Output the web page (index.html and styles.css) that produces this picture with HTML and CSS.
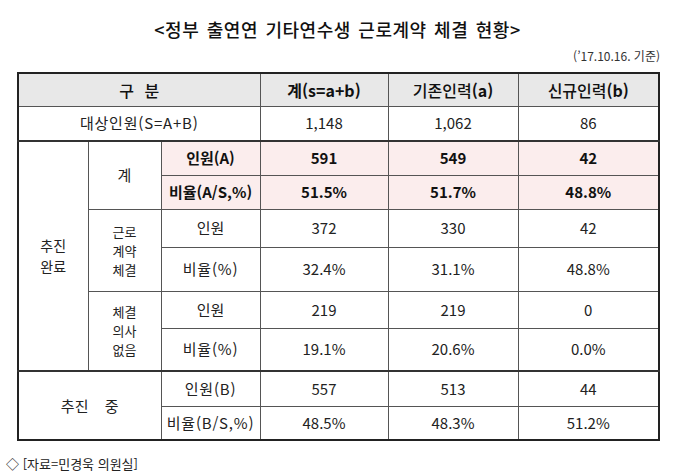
FILE: index.html
```html
<!DOCTYPE html>
<html lang="ko">
<head>
<meta charset="utf-8">
<title>정부 출연연 기타연수생 근로계약 체결 현황</title>
<link rel="stylesheet" href="styles.css">
</head>
<body>
<div class="sheet">
  <h1 class="title">&lt;정부 출연연 기타연수생 근로계약 체결 현황&gt;</h1>
  <p class="date">(’17.10.16. 기준)</p>
  <table class="status">
    <colgroup>
      <col class="c1"><col class="c2"><col class="c3"><col class="c4"><col class="c5"><col class="c6">
    </colgroup>
    <tr class="r-head">
      <th colspan="3" class="head-label">구 분</th>
      <th class="bold">계(s=a+b)</th>
      <th>기존인력<b>(a)</b></th>
      <th>신규인력<b>(b)</b></th>
    </tr>
    <tr class="r-target">
      <td colspan="3" class="spaced">대상인원(S=A+B)</td>
      <td>1,148</td><td>1,062</td><td>86</td>
    </tr>
    <tr class="r-sum pink">
      <td rowspan="6" class="group two-line">추진<br>완료</td>
      <td rowspan="2" class="sub white">계</td>
      <td>인원(A)</td>
      <td>591</td><td>549</td><td>42</td>
    </tr>
    <tr class="r-sum pink">
      <td>비율(A/S,%)</td>
      <td>51.5%</td><td>51.7%</td><td>48.8%</td>
    </tr>
    <tr class="r-c1">
      <td rowspan="2" class="sub stack">근로<br>계약<br>체결</td>
      <td>인원</td>
      <td>372</td><td>330</td><td>42</td>
    </tr>
    <tr class="r-c2">
      <td class="spaced">비율(%)</td>
      <td>32.4%</td><td>31.1%</td><td>48.8%</td>
    </tr>
    <tr class="r-n1">
      <td rowspan="2" class="sub stack">체결<br>의사<br>없음</td>
      <td>인원</td>
      <td>219</td><td>219</td><td>0</td>
    </tr>
    <tr class="r-n2">
      <td class="spaced">비율(%)</td>
      <td>19.1%</td><td>20.6%</td><td>0.0%</td>
    </tr>
    <tr class="r-p1 top-strong">
      <td colspan="2" rowspan="2" class="group wide">추진&nbsp; 중</td>
      <td class="spaced">인원(B)</td>
      <td>557</td><td>513</td><td>44</td>
    </tr>
    <tr class="r-p2">
      <td class="spaced">비율(B/S,%)</td>
      <td>48.5%</td><td>48.3%</td><td>51.2%</td>
    </tr>
  </table>
</div>
<p class="source">◇ [자료=민경욱 의원실]</p>
</body>
</html>
```
FILE: styles.css
```css
html, body {
  margin: 0;
  padding: 0;
  background: #ffffff;
}

body {
  font-family: "Noto Sans CJK KR", "Noto Sans", sans-serif;
  color: #222222;
  width: 680px;
  height: 474px;
  overflow: hidden;
}

.sheet {
  width: 641px;
  margin-left: 17px;
}

.title {
  margin: 0;
  padding-top: 18px;
  font-size: 18px;
  line-height: 23px;
  font-weight: 500;
  letter-spacing: 0.5px;
  word-spacing: 2px;
  text-align: center;
  color: #111111;
}

.date {
  margin: 7px -2px 0 0;
  font-size: 12px;
  line-height: 16px;
  text-align: right;
  color: #333333;
}

.status {
  margin-top: 8px;
  width: 641px;
  border-collapse: collapse;
  table-layout: fixed;
  border: 2px solid #222222;
}

.c1 { width: 70px; }
.c2 { width: 73px; }
.c3 { width: 99px; }
.c4 { width: 128px; }
.c5 { width: 130px; }
.c6 { width: 141px; }

.status th,
.status td {
  border: 1px solid #555555;
  padding: 0;
  text-align: center;
  vertical-align: middle;
  font-size: 15px;
  line-height: 18px;
  font-weight: 400;
}

.status th {
  background: #e8e8e8;
  font-size: 16px;
  font-weight: 500;
  color: #111111;
}

.status th b,
.status th.bold {
  font-weight: 700;
}

.head-label {
  word-spacing: 6px;
}

.spaced {
  letter-spacing: 0.8px;
}

.r-head { height: 33px; }
.r-target { height: 35px; }
.r-sum { height: 34px; }
.r-c1 { height: 38px; }
.r-c2 { height: 44px; }
.r-n1 { height: 37px; }
.r-n2 { height: 43px; }
.r-p1 { height: 35px; }
.r-p2 { height: 34px; }

.r-target td {
  border-bottom: 2px solid #333333;
}

.top-strong td {
  border-top: 2px solid #333333;
}

.pink td {
  background: #fbeded;
  font-weight: 700;
  color: #111111;
}

.pink td.white,
.pink td.group {
  background: #ffffff;
  font-weight: 400;
  color: #222222;
}

.status td.two-line {
  font-size: 14px;
  line-height: 21px;
}

.status td.stack {
  font-size: 13px;
  line-height: 19px;
}

.wide {
  word-spacing: 4px;
}

.source {
  margin: 15px 0 0 6px;
  font-size: 13px;
  line-height: 16px;
  color: #222222;
}
```
